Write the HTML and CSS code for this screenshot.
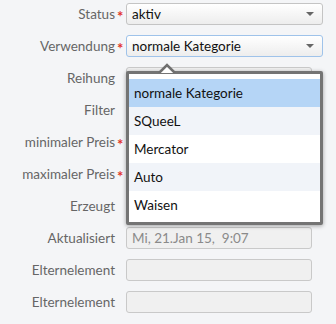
FILE: index.html
```html
<!DOCTYPE html>
<html>
<head>
  <meta charset="UTF-8">
  <title>Kategorie bearbeiten</title>
  <link rel="stylesheet" href="styles.css">
</head>
<body>

<!-- Category form -->
<div class="form">
  <div class="row">
    <label>Status</label><span class="req">*</span>
    <div class="select"><span>aktiv</span><i class="arrow"></i></div>
  </div>

  <div class="row">
    <label>Verwendung</label><span class="req">*</span>
    <div class="field">
      <div class="select focus"><span>normale Kategorie</span><i class="arrow"></i></div>

      <!-- open dropdown -->
      <div class="popup">
        <svg class="caret" width="18" height="10" viewBox="0 0 18 10">
          <path d="M1 10 L9 2 L17 10" fill="#fff" stroke="#6f6f6f" stroke-width="2.6"/>
        </svg>
        <ul class="options">
          <li class="selected">normale Kategorie</li>
          <li>SQueeL</li>
          <li>Mercator</li>
          <li>Auto</li>
          <li>Waisen</li>
        </ul>
      </div>
    </div>
  </div>

  <div class="row">
    <label>Reihung</label><span class="req"></span>
    <div class="input"></div>
  </div>

  <div class="row">
    <label>Filter</label><span class="req"></span>
    <div class="input"></div>
  </div>

  <div class="row">
    <label>minimaler Preis</label><span class="req">*</span>
    <div class="input"></div>
  </div>

  <div class="row">
    <label>maximaler Preis</label><span class="req">*</span>
    <div class="input"></div>
  </div>

  <div class="row">
    <label>Erzeugt</label><span class="req"></span>
    <div class="input"></div>
  </div>

  <div class="row">
    <label>Aktualisiert</label><span class="req"></span>
    <div class="input">Mi, 21.Jan 15,&nbsp; 9:07</div>
  </div>

  <div class="row">
    <label>Elternelement</label><span class="req"></span>
    <div class="input"></div>
  </div>

  <div class="row">
    <label>Elternelement</label><span class="req"></span>
    <div class="input"></div>
  </div>
</div>

</body>
</html>
```

FILE: styles.css
```css
* {
  box-sizing: border-box;
}

body {
  margin: 0;
  background-color: #f4f5f7;
  font-family: Lato, "Open Sans", sans-serif;
  font-size: 13px;
}

.form {
  display: flex;
  flex-direction: column;
  gap: 10px;
  padding: 3px 13px 0 0;
}

.row {
  display: grid;
  grid-template-columns: 115px 11px 1fr;
  grid-template-rows: 22px;
  align-items: center;
  height: 22px;
}

label {
  color: #666;
  font-size: 13.5px;
  text-align: right;
  white-space: nowrap;
}

.req {
  color: #e2332b;
  font-size: 15px;
  font-weight: bold;
  height: 22px;
  padding: 3px 0 0 2px;
  line-height: 20px;
}

.field {
  position: relative;
}

/* Select boxes */
.select {
  display: flex;
  align-items: center;
  justify-content: space-between;
  height: 22px;
  padding: 0 8px 0 5px;
  border: 1px solid #c4c4c4;
  border-radius: 3px;
  background: linear-gradient(#fff, #ededed);
  color: #111;
  font-size: 13.5px;
}

.select.focus {
  border-color: #9fc3ea;
}

.arrow {
  width: 0;
  height: 0;
  border-left: 4px solid transparent;
  border-right: 4px solid transparent;
  border-top: 4px solid #666;
}

/* Text inputs (read only) */
.input {
  height: 22px;
  width: 186px;
  padding: 0 5px;
  line-height: 20px;
  border: 1px solid #c9c9c9;
  border-radius: 3px;
  background-color: #f0f0f0;
  color: #8a8a8a;
  font-size: 13.5px;
  white-space: nowrap;
}

/* Open dropdown list */
.popup {
  position: absolute;
  top: 36px;
  left: 0;
  width: 197px;
  border: 3px solid #747474;
  border-radius: 2px;
  background-color: #fff;
  box-shadow: 0 1px 4px rgba(0, 0, 0, 0.35);
  padding: 5px 0 3px;
  z-index: 5;
}

.caret {
  position: absolute;
  top: -11px;
  left: 29px;
}

.options {
  list-style: none;
  margin: 0;
  padding: 0;
}

.options li {
  height: 28px;
  line-height: 28px;
  padding-left: 5px;
  color: #111;
  font-size: 13.5px;
}

.options li:nth-child(even) {
  background-color: #f1f4f9;
}

.options li.selected {
  background-color: #b5d5f6;
}
```
